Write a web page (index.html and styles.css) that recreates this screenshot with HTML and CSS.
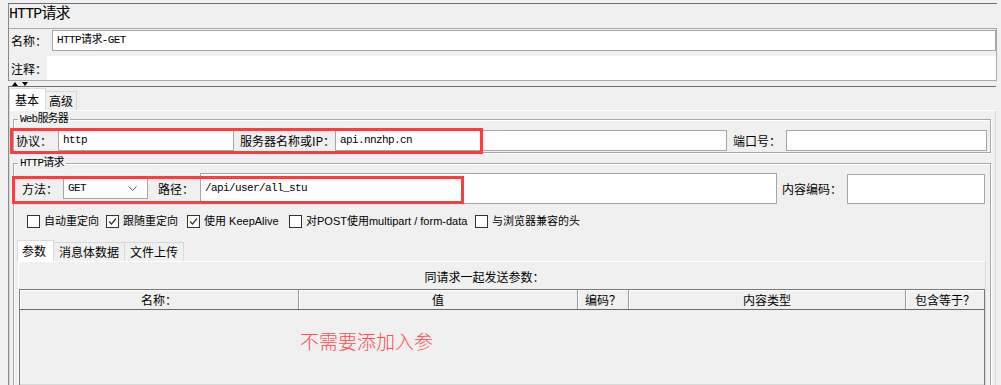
FILE: index.html
```html
<!DOCTYPE html>
<html lang="zh-cn">
<head>
    <meta charset="utf-8"/>
    <title>HTTP请求</title>
    <link rel="stylesheet" href="styles.css">
</head>
<body>
<div class="app">
    <div class="info">
        <div class="title">HTTP请求</div>
        <div class="info-box">
            <div class="name-row"><span class="lbl">名称：</span><div class="field mono">HTTP请求-GET</div></div>
            <div class="note-row"><span class="lbl">注释：</span><div class="note"></div></div>
        </div>
    </div>
    <div class="splitter">
        <svg width="18" height="5" viewBox="0 0 18 5"><polygon points="0,5 3,1 6,5" fill="#000"/><polygon points="10,1 16,1 13,5" fill="#000"/></svg>
    </div>
    <div class="main">
        <div class="tabs">
            <div class="tab active">基本</div>
            <div class="tab">高级</div>
        </div>
        <div class="tab-panel">
            <fieldset class="group web">
                <legend class="mono">Web服务器</legend>
                <div class="row">
                    <span class="lbl w-proto">协议：</span>
                    <div class="field mono w-http">http</div>
                    <span class="lbl w-server">服务器名称或IP：</span>
                    <div class="field mono w-host">api.nnzhp.cn</div>
                    <span class="lbl w-port">端口号：</span>
                    <div class="field grow port"></div>
                </div>
            </fieldset>
            <fieldset class="group http">
                <legend class="mono">HTTP请求</legend>
                <div class="row tall">
                    <span class="lbl w-method">方法：</span>
                    <div class="field select mono">GET
                        <svg width="9" height="5" viewBox="0 0 9 5"><path d="M0.5 0.5 L4.5 4.5 L8.5 0.5" fill="none" stroke="#555" stroke-width="1"/></svg>
                    </div>
                    <span class="lbl w-path">路径：</span>
                    <div class="field mono path">/api/user/all_stu</div>
                    <span class="lbl w-enc">内容编码：</span>
                    <div class="field enc"></div>
                </div>
                <div class="checks">
                    <label class="check"><span class="box"></span>自动重定向</label>
                    <label class="check"><span class="box"><svg width="11" height="11" viewBox="0 0 11 11"><path d="M2 5.5 L4.5 8 L9 2.5" fill="none" stroke="#333" stroke-width="1.2"/></svg></span>跟随重定向</label>
                    <label class="check"><span class="box"><svg width="11" height="11" viewBox="0 0 11 11"><path d="M2 5.5 L4.5 8 L9 2.5" fill="none" stroke="#333" stroke-width="1.2"/></svg></span>使用 KeepAlive</label>
                    <label class="check"><span class="box"></span>对POST使用multipart / form-data</label>
                    <label class="check"><span class="box"></span>与浏览器兼容的头</label>
                </div>
                <div class="subtabs">
                    <div class="tab active">参数</div>
                    <div class="tab">消息体数据</div>
                    <div class="tab">文件上传</div>
                </div>
                <div class="params">
                    <div class="caption">同请求一起发送参数：</div>
                    <div class="table">
                        <div class="thead">
                            <div class="th">名称：</div>
                            <div class="th">值</div>
                            <div class="th">编码？</div>
                            <div class="th">内容类型</div>
                            <div class="th">包含等于？</div>
                        </div>
                        <div class="tbody">
                            <p class="note-red">不需要添加入参</p>
                        </div>
                    </div>
                </div>
            </fieldset>
        </div>
    </div>
    <div class="mark mark-server"></div>
    <div class="mark mark-path"></div>
</div>
</body>
</html>
```

FILE: styles.css
```css
* {
    box-sizing: border-box;
}
body {
    margin: 0;
    width: 1001px;
    height: 385px;
    overflow: hidden;
    background: #f0f0f0;
    font-family: "Noto Sans CJK SC", sans-serif;
    font-size: 12px;
    color: #000;
}
.mono {
    font-family: "Liberation Mono", "Noto Sans CJK SC", monospace;
    font-size: 11px;
    letter-spacing: -0.6px;
}
.app {
    position: relative;
    height: 385px;
    overflow: hidden;
    padding: 3px 4px 0 8px;
}
.info {
    border-top: 1px solid #6e6e6e;
    border-left: 1px solid #8a8a8a;
}
.title {
    height: 24px;
    line-height: 22px;
    font-family: "Liberation Mono", "Noto Sans CJK SC", monospace;
    font-size: 15px;
    letter-spacing: -0.9px;
}
.info-box {
    border: 1px solid #a9a9a9;
    border-left: none;
}
.name-row {
    display: flex;
    align-items: center;
    height: 27px;
    padding-bottom: 4px;
}
.name-row .lbl {
    width: 43px;
    padding-left: 2px;
}
.note-row {
    display: flex;
    height: 24px;
}
.note-row .lbl {
    width: 38px;
    padding-left: 2px;
    line-height: 26px;
}
.note {
    flex: 1;
    background: #fff;
}
.lbl {
    flex: none;
    white-space: nowrap;
    line-height: 16px;
}
.field {
    flex: none;
    height: 21px;
    background: #fff;
    border: 1px solid #a6a6a6;
    padding-left: 4px;
    line-height: 19px;
    white-space: nowrap;
}
.name-row .field {
    flex: 1;
}
.splitter {
    height: 5px;
    padding-left: 4px;
    display: flex;
    align-items: flex-end;
}
.splitter svg {
    display: block;
}
.main {
    border-top: 1px solid #6e6e6e;
    border-left: 1px solid #8a8a8a;
    margin-right: 1px;
    padding-top: 1px;
}
.tabs, .subtabs {
    display: flex;
    align-items: flex-end;
}
.tab {
    height: 19px;
    line-height: 18px;
    padding: 0 4px;
    border: 1px solid #d9d9d9;
    border-bottom: none;
    background: #f0f0f0;
    margin-left: -1px;
    white-space: nowrap;
}
.tab.active {
    height: 22px;
    line-height: 21px;
    background: #fff;
    margin-left: 0;
    position: relative;
    z-index: 1;
}
.tabs .tab.active {
    width: 37px;
    padding-left: 5px;
}
.tabs .tab {
    padding: 0 3px;
}
.tab-panel {
    border: 1px solid #d9d9d9;
    border-top-color: #fff;
    padding: 2px 4px 0 3px;
    height: 280px;
}
.group {
    margin: 0;
    padding: 0 1px 0 2px;
    border: 1px solid #a8a8a8;
    box-shadow: inset 1px 1px 0 #fff, 1px 1px 0 #fff;
    min-width: 0;
}
.group legend {
    margin-left: 2px;
    padding: 0 2px;
    line-height: 12px;
    letter-spacing: -0.8px;
    white-space: nowrap;
}
.web {
    padding-top: 5px;
    padding-bottom: 1px;
}
.http {
    margin-top: 4px;
    padding-top: 4px;
    height: 235px;
}
.row {
    display: flex;
    align-items: center;
    height: 21px;
}
.row.tall {
    height: 31px;
    padding-left: 6px;
}
.w-proto { width: 42px; }
.w-http { width: 176px; }
.w-server { width: 95px; margin-left: 6px; }
.w-host { width: 392px; }
.w-port { width: 53px; margin-left: 6px; }
.grow {
    flex: 1;
}
.port {
    margin-right: 2px;
}
.w-method { width: 41px; }
.select {
    width: 85px;
    display: flex;
    align-items: center;
    justify-content: space-between;
    padding-right: 10px;
}
.w-path { width: 42px; margin-left: 10px; }
.path {
    width: 577px;
    height: 31px;
    line-height: 28px;
}
.w-enc { width: 65px; margin-left: 5px; }
.enc {
    width: 138px;
    height: 30px;
}
.checks {
    display: grid;
    grid-template-columns: 79px 81px 102px 186px auto;
    margin-top: 11px;
    padding-left: 11px;
    height: 13px;
    font-family: "Liberation Sans", "Noto Sans CJK SC", sans-serif;
    font-size: 11px;
}
.check {
    display: flex;
    align-items: center;
    white-space: nowrap;
    line-height: 13px;
}
.box {
    width: 13px;
    height: 13px;
    margin-right: 4px;
    background: #fff;
    border: 1px solid #333;
    display: flex;
    align-items: center;
    justify-content: center;
}
.box svg {
    display: block;
}
.subtabs {
    margin-top: 12px;
    margin-left: 1px;
}
.subtabs .tab.active {
    height: 21px;
    line-height: 20px;
    width: 37px;
    padding-left: 4px;
}
.subtabs .tab {
    padding: 0 5px;
}
.params {
    border: 1px solid #d9d9d9;
    border-top-color: #fff;
    border-left-color: #fff;
    margin: 0 3px 0 2px;
    height: 124px;
}
.caption {
    height: 27px;
    padding-top: 8px;
    padding-right: 35px;
    line-height: 14px;
    text-align: center;
}
.table {
    border: 1px solid #7a7a7a;
    border-bottom: none;
    height: 96px;
}
.thead {
    display: grid;
    grid-template-columns: 279px 279px 51px 277px 1fr;
    height: 20px;
    border-bottom: 1px solid #6b6b6b;
}
.th {
    border-right: 1px solid #9a9a9a;
    box-shadow: inset 1px 1px 0 #fff;
    text-align: center;
    line-height: 19px;
    white-space: nowrap;
}
.th:last-child {
    border-right: none;
}
.tbody {
    padding: 21px 0 0 280px;
}
.note-red {
    margin: 0;
    color: #ff4b4b;
    font-size: 19px;
    font-weight: 300;
    line-height: 20px;
}
.mark {
    position: absolute;
    border: 3px solid #ff3b3b;
}
.mark-server {
    left: 10px;
    top: 128px;
    width: 473px;
    height: 26px;
}
.mark-path {
    left: 12px;
    top: 176px;
    width: 452px;
    height: 28px;
}
```
